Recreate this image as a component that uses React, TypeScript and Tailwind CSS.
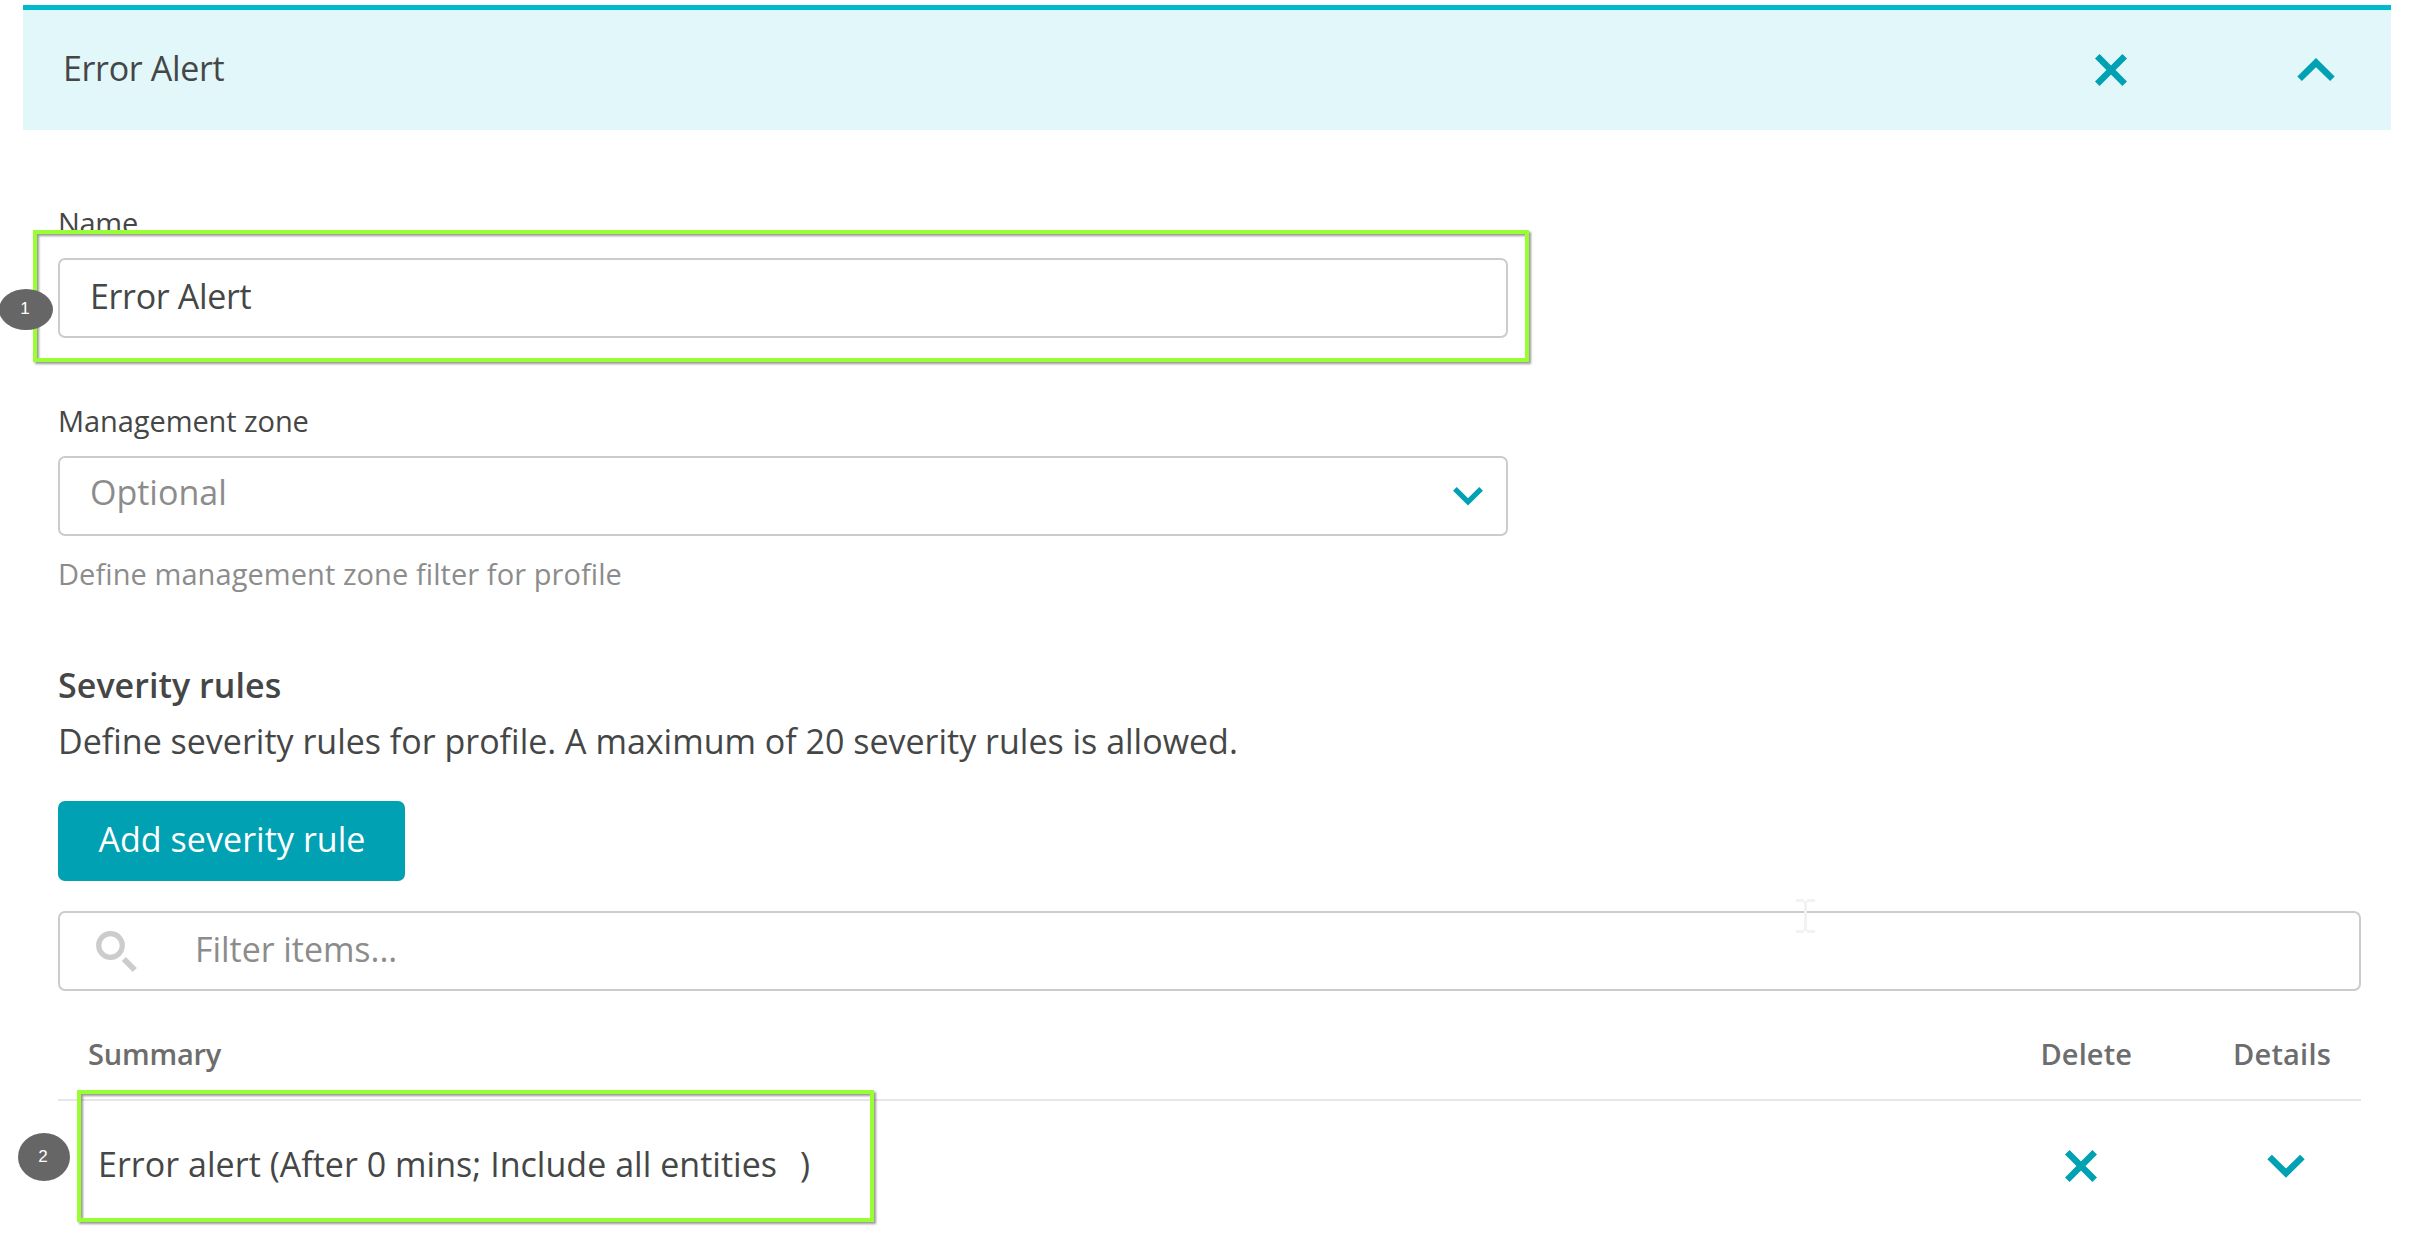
import type { ReactNode } from "react";

function CrossIcon() {
  return (
    <svg className="size-12 shrink-0" viewBox="-24 -24 48 48" fill="none" stroke="#00a1b2" strokeWidth="6.5">
      <path d="M-13.7 -13.7 13.7 13.7M13.7 -13.7 -13.7 13.7" />
    </svg>
  );
}

function ChevronIcon({ up = false }: { up?: boolean }) {
  return (
    <svg className="size-12 shrink-0" viewBox="-24 -24 48 48" fill="none" stroke="#00a1b2" strokeWidth="6.5">
      <path d={up ? "M-16.4 8.8 0 -7.4 16.4 8.8" : "M-16.4 -9 0 7.1 16.4 -9"} />
    </svg>
  );
}

function SearchIcon() {
  return (
    <svg className="size-12 shrink-0" viewBox="91 927 48 48" fill="none" stroke="#ccc">
      <circle cx="110.5" cy="945.5" r="11.8" strokeWidth="5.2" />
      <path d="M123.8 959 134.8 970" strokeWidth="5.8" />
    </svg>
  );
}

function Field({ className, children }: { className: string; children: ReactNode }) {
  return (
    <div className={`flex h-20 items-center rounded-[7px] border-2 border-[#ccc] bg-white ${className}`}>
      {children}
    </div>
  );
}

function Highlight({ className }: { className: string }) {
  return (
    <div
      className={`absolute border-4 border-[#99ff33] drop-shadow-[2.5px_2.5px_1px_rgba(0,0,0,0.4)] ${className}`}
    />
  );
}

function Marker({ className, children }: { className: string; children: ReactNode }) {
  return (
    <div
      className={`absolute flex items-center justify-center rounded-[50%] bg-[#666] pr-0.5 pb-0.5 font-['Liberation_Sans',sans-serif] text-[17px] leading-none text-white ${className}`}
    >
      {children}
    </div>
  );
}

export default function App() {
  return (
    <div className="relative h-[1236px] w-[2417px] overflow-hidden bg-white pt-[5px] font-['Open_Sans',sans-serif] text-[34px] leading-[50px] text-[#454646]">
      <header className="mr-[26px] ml-[23px] flex h-[125px] items-center border-t-5 border-[#00b9cc] bg-[#e1f7fa] pr-[51px] pl-10">
        <h1 className="flex-1 pb-1 tracking-[-0.35px]">Error Alert</h1>
        <div className="flex gap-[157px]">
          <CrossIcon />
          <ChevronIcon up />
        </div>
      </header>

      <main className="mr-14 ml-[58px] flex flex-col pt-[73px]">
        <div className="flex w-[1450px] flex-col">
          <label className="text-[29px] leading-10 tracking-[-0.3px]">Name</label>
          <Field className="mt-[15px] pb-1 pl-[30px]">
            <span className="tracking-[-0.35px]">Error Alert</span>
          </Field>
          <label className="mt-[63px] text-[29px] leading-10 tracking-[-0.08px]">Management zone</label>
          <Field className="mt-[15px] justify-between pr-[14px] pl-[30px] text-[#8c8c8c]">
            <span className="pb-2">Optional</span>
            <svg className="size-12" viewBox="-24 -24 48 48" fill="none" stroke="#00a1b2" strokeWidth="5.2">
              <path d="M-13.1 -7.1 0 5.8 13.1 -7.1" />
            </svg>
          </Field>
          <p className="mt-[18px] text-[29px] leading-10 tracking-[0.07px] text-[#8c8c8c]">
            Define management zone filter for profile
          </p>
        </div>

        <h2 className="mt-[66px] font-semibold tracking-[0.05px]">Severity rules</h2>
        <p className="mt-1.5">
          Define severity rules for profile. A maximum of 20 severity rules is allowed.
        </p>
        <button className="mt-[35px] flex h-20 w-[347px] items-center justify-center rounded-[7px] bg-[#00a1b2] pb-1 pl-px tracking-[0.05px] text-white">
          Add severity rule
        </button>

        <Field className="mt-[30px] pl-[31px] text-[#8c8c8c]">
          <SearchIcon />
          <span className="pb-1 pl-14 tracking-[-0.05px]">Filter items...</span>
        </Field>

        <div className="mt-[43px] flex border-b-2 border-[#e6e6e6] pr-[30px] pb-[25px] pl-[30px] text-[29px] leading-10 font-semibold text-[#6d6d6d]">
          <span className="flex-1 tracking-[-0.2px]">Summary</span>
          <span className="pr-[101px] tracking-[0.1px]">Delete</span>
          <span className="tracking-[0.2px]">Details</span>
        </div>
        <div className="flex h-[130px] items-center pr-[51px] pl-10">
          <span className="flex-1 pb-1 whitespace-pre">
            <span className="tracking-[0.03px]">Error alert (After 0 mins; Include all entities</span>
            <span className="pl-[23px]">)</span>
          </span>
          <div className="flex gap-[157px]">
            <CrossIcon />
            <ChevronIcon />
          </div>
        </div>
      </main>

      <Highlight className="top-[230px] left-[33px] h-[132px] w-[1496px]" />
      <Highlight className="top-[1090px] left-[77px] h-[132px] w-[797px]" />
      <Marker className="top-[289px] left-[-1px] h-[41px] w-[54px]">1</Marker>
      <Marker className="top-[1133px] left-[18px] h-12 w-[52px]">2</Marker>

      <svg
        className="absolute top-[899px] left-[1796px] h-[34px] w-[19px]"
        viewBox="0 0 19 34"
        fill="none"
        stroke="#f2f2f2"
        strokeWidth="3"
      >
        <path d="M0 1.5H8M11 1.5H19M9.5 2V32M0 32.5H8M11 32.5H19" />
      </svg>
    </div>
  );
}
